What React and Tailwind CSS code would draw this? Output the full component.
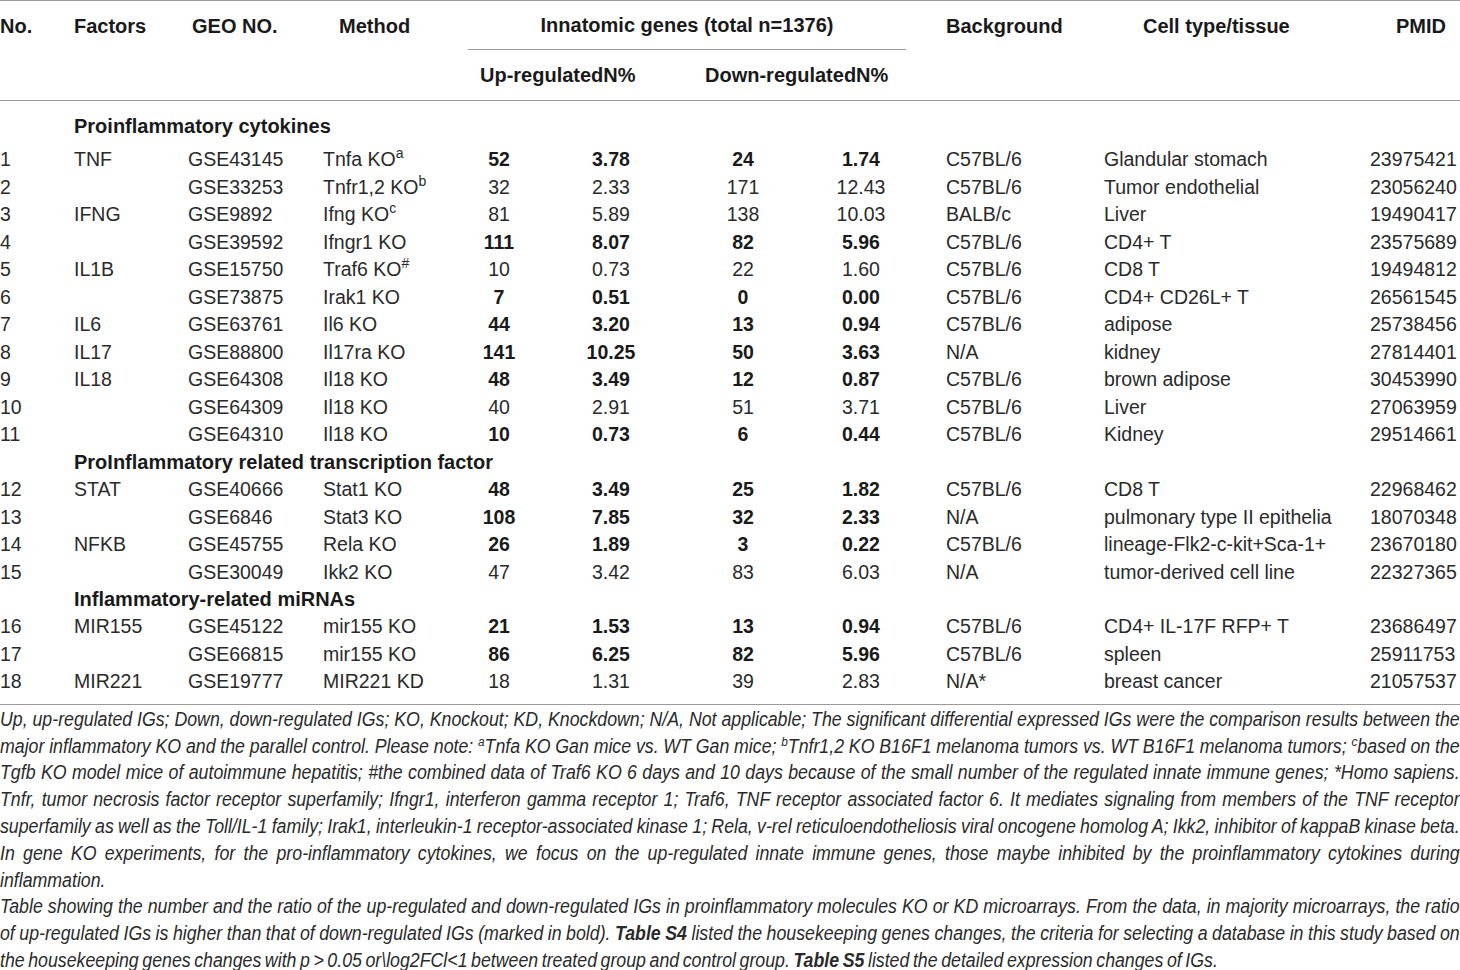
import React from "react";

const rows = [
  ["1", "TNF", "GSE43145", "Tnfa KO", "a", "52", "3.78", "24", "1.74", "C57BL/6", "Glandular stomach", "23975421", true],
  ["2", "", "GSE33253", "Tnfr1,2 KO", "b", "32", "2.33", "171", "12.43", "C57BL/6", "Tumor endothelial", "23056240", false],
  ["3", "IFNG", "GSE9892", "Ifng KO", "c", "81", "5.89", "138", "10.03", "BALB/c", "Liver", "19490417", false],
  ["4", "", "GSE39592", "Ifngr1 KO", "", "111", "8.07", "82", "5.96", "C57BL/6", "CD4+ T", "23575689", true],
  ["5", "IL1B", "GSE15750", "Traf6 KO", "#", "10", "0.73", "22", "1.60", "C57BL/6", "CD8 T", "19494812", false],
  ["6", "", "GSE73875", "Irak1 KO", "", "7", "0.51", "0", "0.00", "C57BL/6", "CD4+ CD26L+ T", "26561545", true],
  ["7", "IL6", "GSE63761", "Il6 KO", "", "44", "3.20", "13", "0.94", "C57BL/6", "adipose", "25738456", true],
  ["8", "IL17", "GSE88800", "Il17ra KO", "", "141", "10.25", "50", "3.63", "N/A", "kidney", "27814401", true],
  ["9", "IL18", "GSE64308", "Il18 KO", "", "48", "3.49", "12", "0.87", "C57BL/6", "brown adipose", "30453990", true],
  ["10", "", "GSE64309", "Il18 KO", "", "40", "2.91", "51", "3.71", "C57BL/6", "Liver", "27063959", false],
  ["11", "", "GSE64310", "Il18 KO", "", "10", "0.73", "6", "0.44", "C57BL/6", "Kidney", "29514661", true],
  "ProInflammatory related transcription factor",
  ["12", "STAT", "GSE40666", "Stat1 KO", "", "48", "3.49", "25", "1.82", "C57BL/6", "CD8 T", "22968462", true],
  ["13", "", "GSE6846", "Stat3 KO", "", "108", "7.85", "32", "2.33", "N/A", "pulmonary type II epithelia", "18070348", true],
  ["14", "NFKB", "GSE45755", "Rela KO", "", "26", "1.89", "3", "0.22", "C57BL/6", "lineage-Flk2-c-kit+Sca-1+", "23670180", true],
  ["15", "", "GSE30049", "Ikk2 KO", "", "47", "3.42", "83", "6.03", "N/A", "tumor-derived cell line", "22327365", false],
  "Inflammatory-related miRNAs",
  ["16", "MIR155", "GSE45122", "mir155 KO", "", "21", "1.53", "13", "0.94", "C57BL/6", "CD4+ IL-17F RFP+ T", "23686497", true],
  ["17", "", "GSE66815", "mir155 KO", "", "86", "6.25", "82", "5.96", "C57BL/6", "spleen", "25911753", true],
  ["18", "MIR221", "GSE19777", "MIR221 KD", "", "18", "1.31", "39", "2.83", "N/A*", "breast cancer", "21057537", false],
];

const GRID =
  "grid grid-cols-[74px_114px_135px_145px_62px_162px_102px_134px_176px_266px_90px]";

function Sup({ children }) {
  return <span className="relative -top-[8px] text-[14px] leading-none">{children}</span>;
}

function Row({ r }) {
  const [no, fac, geo, method, sup, un, up, dn, dp, bg, cell, pmid, bold] = r;
  const num = bold ? "font-bold text-[#1a1a1a]" : "";
  return (
    <div className={`${GRID} h-[27.47px] leading-[27.47px] whitespace-nowrap`}>
      <div>{no}</div>
      <div>{fac}</div>
      <div>{geo}</div>
      <div>
        {method}
        {sup && <Sup>{sup}</Sup>}
      </div>
      <div className={`text-center ${num}`}>{un}</div>
      <div className={`text-center ${num}`}>{up}</div>
      <div className={`text-center ${num}`}>{dn}</div>
      <div className={`text-center ${num}`}>{dp}</div>
      <div className="pl-[18px]">{bg}</div>
      <div>{cell}</div>
      <div>{pmid}</div>
    </div>
  );
}

function Section({ title, first }) {
  return (
    <div className={`${GRID} h-[27.47px] leading-[27.47px] ${first ? "mt-[12px] mb-[6px]" : ""}`}>
      <div className="col-start-2 col-span-10 font-bold text-[20px] text-[#1a1a1a] whitespace-nowrap">
        {title}
      </div>
    </div>
  );
}

const J =
  "w-[1604px] origin-left scale-x-[0.91] [word-spacing:-1.5px] whitespace-nowrap [text-align:justify] [text-align-last:justify] h-[26.8px] leading-[26.8px]";
const L =
  "w-[1604px] origin-left scale-x-[0.91] [word-spacing:-1.5px] whitespace-nowrap h-[26.8px] leading-[26.8px]";

function FSup({ children }) {
  return <span className="relative -top-[7px] text-[13px] leading-none">{children}</span>;
}

export default function App() {
  return (
    <div
      className="w-[1460px] h-[970px] bg-white text-[#2a2a2a] overflow-hidden"
      style={{ fontFamily: '"Liberation Sans", Arial, sans-serif' }}
    >
      <div className="text-[19.5px]">
        {/* Header */}
        <div className={`${GRID} grid-rows-[49px_50px] border-t border-b border-[#9a9a9a] font-bold text-[20px] text-[#1a1a1a] whitespace-nowrap`}>
          <div className="row-start-1 col-start-1 flex items-center">No.</div>
          <div className="row-start-1 col-start-2 flex items-center">Factors</div>
          <div className="row-start-1 col-start-3 flex items-center pl-[4px]">GEO NO.</div>
          <div className="row-start-1 col-start-4 flex items-center pl-[16px]">Method</div>
          <div className="row-start-1 col-start-5 col-span-4">
            <div className="w-[438px] h-full flex items-center justify-center border-b border-[#9a9a9a]">
              Innatomic genes (total n=1376)
            </div>
          </div>
          <div className="row-start-1 col-start-9 flex items-center pl-[18px]">Background</div>
          <div className="row-start-1 col-start-10 flex items-center pl-[39px]">Cell type/tissue</div>
          <div className="row-start-1 col-start-11 flex items-center pl-[26px]">PMID</div>
          <div className="row-start-2 col-start-5 col-span-2 flex items-center pl-[12px]">Up-regulatedN%</div>
          <div className="row-start-2 col-start-7 col-span-2 flex items-center pl-[13px]">Down-regulatedN%</div>
        </div>

        {/* Body */}
        <div className="pb-[8px] border-b border-[#9a9a9a]">
          <Section title="Proinflammatory cytokines" first />
          {rows.map((r, i) =>
            typeof r === "string" ? <Section key={i} title={r} /> : <Row key={i} r={r} />
          )}
        </div>
      </div>

      {/* Footnotes */}
      <div
        className="mt-[1px] italic text-[19.5px] text-[#2a2a2a]"
        style={{ fontFamily: '"Liberation Sans", Arial, sans-serif' }}
      >
        <div className={J}>
          Up, up-regulated IGs; Down, down-regulated IGs; KO, Knockout; KD, Knockdown; N/A, Not applicable; The significant differential expressed IGs were the comparison results between the
        </div>
        <div className={J}>
          major inflammatory KO and the parallel control. Please note: <FSup>a</FSup>Tnfa KO Gan mice vs. WT Gan mice; <FSup>b</FSup>Tnfr1,2 KO B16F1 melanoma tumors vs. WT B16F1 melanoma tumors; <FSup>c</FSup>based on the
        </div>
        <div className={J}>
          Tgfb KO model mice of autoimmune hepatitis; #the combined data of Traf6 KO 6 days and 10 days because of the small number of the regulated innate immune genes; *Homo sapiens.
        </div>
        <div className={J}>
          Tnfr, tumor necrosis factor receptor superfamily; Ifngr1, interferon gamma receptor 1; Traf6, TNF receptor associated factor 6. It mediates signaling from members of the TNF receptor
        </div>
        <div className={J}>
          superfamily as well as the Toll/IL-1 family; Irak1, interleukin-1 receptor-associated kinase 1; Rela, v-rel reticuloendotheliosis viral oncogene homolog A; Ikk2, inhibitor of kappaB kinase beta.
        </div>
        <div className={J}>
          In gene KO experiments, for the pro-inflammatory cytokines, we focus on the up-regulated innate immune genes, those maybe inhibited by the proinflammatory cytokines during
        </div>
        <div className={L}>inflammation.</div>
        <div className={J}>
          Table showing the number and the ratio of the up-regulated and down-regulated IGs in proinflammatory molecules KO or KD microarrays. From the data, in majority microarrays, the ratio
        </div>
        <div className={J}>
          of up-regulated IGs is higher than that of down-regulated IGs (marked in bold). <b>Table S4</b> listed the housekeeping genes changes, the criteria for selecting a database in this study based on
        </div>
        <div className={L}>
          the housekeeping genes changes with p &gt; 0.05 or\log2FCl&lt;1 between treated group and control group. <b>Table S5</b> listed the detailed expression changes of IGs.
        </div>
      </div>
    </div>
  );
}
